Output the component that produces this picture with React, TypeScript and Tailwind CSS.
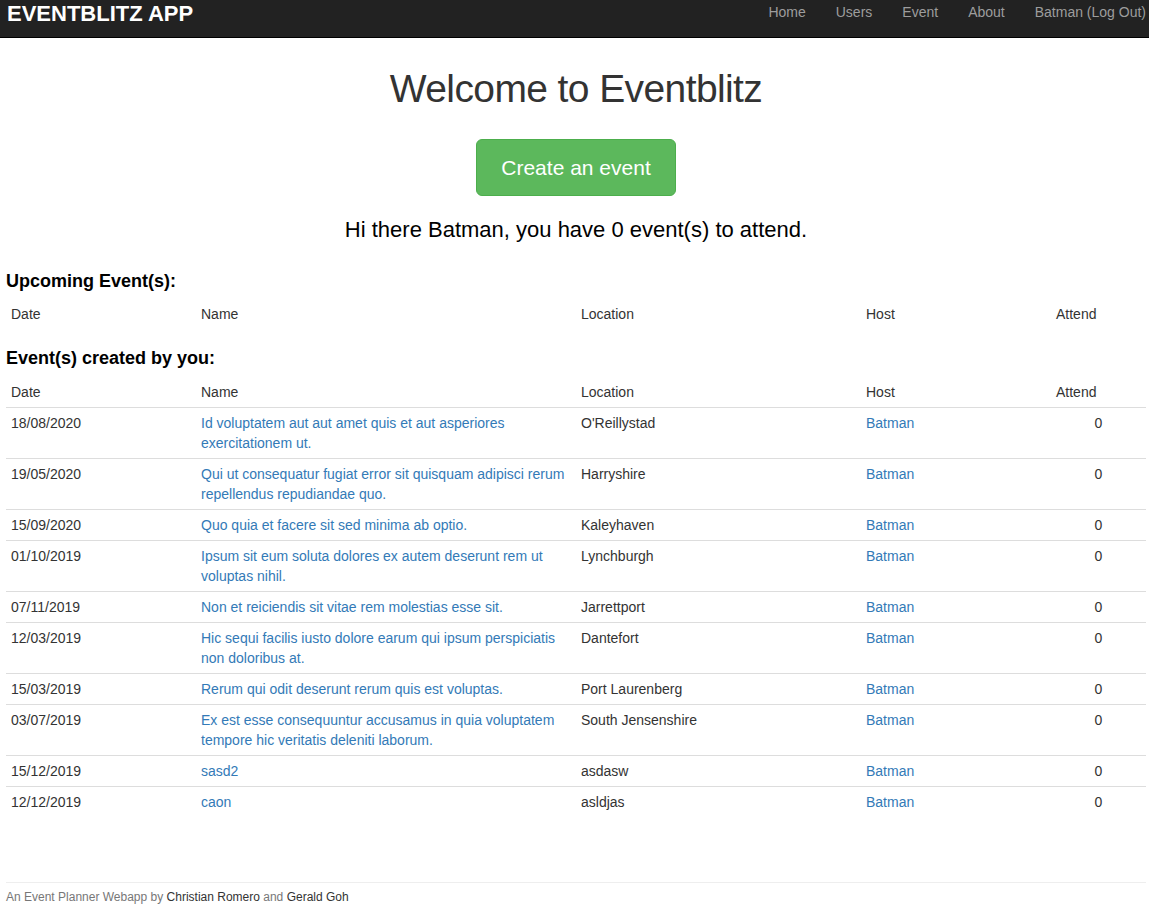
const FONT = { fontFamily: '"Liberation Sans", Arial, Helvetica, sans-serif' };

type Row = { date: string; name: string; location: string };

const ROWS: Row[] = [
  { date: '18/08/2020', name: 'Id voluptatem aut aut amet quis et aut asperiores exercitationem ut.', location: "O'Reillystad" },
  { date: '19/05/2020', name: 'Qui ut consequatur fugiat error sit quisquam adipisci rerum repellendus repudiandae quo.', location: 'Harryshire' },
  { date: '15/09/2020', name: 'Quo quia et facere sit sed minima ab optio.', location: 'Kaleyhaven' },
  { date: '01/10/2019', name: 'Ipsum sit eum soluta dolores ex autem deserunt rem ut voluptas nihil.', location: 'Lynchburgh' },
  { date: '07/11/2019', name: 'Non et reiciendis sit vitae rem molestias esse sit.', location: 'Jarrettport' },
  { date: '12/03/2019', name: 'Hic sequi facilis iusto dolore earum qui ipsum perspiciatis non doloribus at.', location: 'Dantefort' },
  { date: '15/03/2019', name: 'Rerum qui odit deserunt rerum quis est voluptas.', location: 'Port Laurenberg' },
  { date: '03/07/2019', name: 'Ex est esse consequuntur accusamus in quia voluptatem tempore hic veritatis deleniti laborum.', location: 'South Jensenshire' },
  { date: '15/12/2019', name: 'sasd2', location: 'asdasw' },
  { date: '12/12/2019', name: 'caon', location: 'asldjas' },
];

const NAV = ['Home', 'Users', 'Event', 'About', 'Batman (Log Out)'];

function Cols() {
  return (
    <colgroup>
      <col className="w-[190px]" />
      <col className="w-[380px]" />
      <col className="w-[285px]" />
      <col className="w-[190px]" />
      <col className="w-[95px]" />
    </colgroup>
  );
}

function HeadRow({ border }: { border: boolean }) {
  const cls = `px-[5px] py-[5px] text-left font-normal align-top ${border ? 'border-b border-[#ddd]' : ''}`;
  return (
    <tr>
      <th className={cls}>Date</th>
      <th className={cls}>Name</th>
      <th className={cls}>Location</th>
      <th className={cls}>Host</th>
      <th className={cls}>Attend</th>
    </tr>
  );
}

export default function App() {
  return (
    <div className="min-h-[906px] bg-white text-[14px] leading-[20px] text-[#333]" style={FONT}>
      <nav className="flex h-[38px] items-start justify-between border-b border-black bg-[#222] pl-[7px] pr-[3px]">
        <a className="pt-[1px] text-[22px] font-bold leading-[26px] text-white">EVENTBLITZ APP</a>
        <ul className="flex gap-[30px] pt-[2px]">
          {NAV.map((n) => (
            <li key={n} className="text-[14px] leading-[20px] text-[#9d9d9d]">{n}</li>
          ))}
        </ul>
      </nav>

      <div className="mx-[6px] w-[1140px]">
        <h1 className="mt-[27px] text-center text-[39px] leading-[48px] tracking-[-0.6px] text-[#333]">Welcome to Eventblitz</h1>
        <div className="mt-[26px] flex justify-center">
          <button type="button" className="h-[57px] w-[200px] rounded-[6px] border border-[#4cae4c] bg-[#5cb85c] text-[21px] text-white">
            Create an event
          </button>
        </div>
        <h3 className="mt-[18px] text-center text-[22px] leading-[32px] text-black">Hi there Batman, you have 0 event(s) to attend.</h3>

        <h4 className="mt-[24px] text-[18px] font-bold leading-[22px] text-black">Upcoming Event(s):</h4>
        <table className="mt-[7px] w-full table-fixed border-collapse">
          <Cols />
          <thead>
            <HeadRow border={false} />
          </thead>
        </table>

        <h4 className="mt-[18px] text-[18px] font-bold leading-[22px] text-black">Event(s) created by you:</h4>
        <table className="mt-[8px] w-full table-fixed border-collapse">
          <Cols />
          <thead>
            <HeadRow border={true} />
          </thead>
          <tbody>
            {ROWS.map((r, i) => (
              <tr key={r.date + r.name} className={i < ROWS.length - 1 ? 'border-b border-[#ddd]' : ''}>
                <td className="px-[5px] py-[5px] align-top">{r.date}</td>
                <td className="px-[5px] py-[5px] align-top text-[#337ab7]">{r.name}</td>
                <td className="px-[5px] py-[5px] align-top">{r.location}</td>
                <td className="px-[5px] py-[5px] align-top text-[#337ab7]">Batman</td>
                <td className="px-[5px] py-[5px] align-top text-center">0</td>
              </tr>
            ))}
          </tbody>
        </table>

        <footer className="mt-[65px] border-t border-[#eee] pt-[6px] text-[12px] leading-[17px] text-[#777]">
          An Event Planner Webapp by <span className="text-[#333]">Christian Romero</span> and <span className="text-[#333]">Gerald Goh</span>
        </footer>
      </div>
    </div>
  );
}
